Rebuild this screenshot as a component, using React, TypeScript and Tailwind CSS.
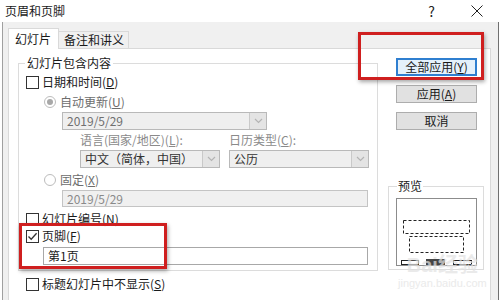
import React from 'react';

function Box({ checked = false }: { checked?: boolean }) {
  return (
    <span className="w-[13px] h-[13px] border border-[#333333] bg-white flex items-center justify-center shrink-0">
      {checked && (
        <svg width="11" height="11" viewBox="0 0 11 11">
          <path d="M1.5 5.5 L4.2 8.3 L9.6 2.2" fill="none" stroke="#333333" strokeWidth="1.3" />
        </svg>
      )}
    </span>
  );
}

function Radio({ on = false }: { on?: boolean }) {
  return (
    <span className="w-[12px] h-[12px] rounded-full border border-[#bcbcbc] bg-white flex items-center justify-center shrink-0">
      {on && <span className="w-[6px] h-[6px] rounded-full bg-[#a8a8a8]" />}
    </span>
  );
}

function Chevron() {
  return (
    <svg width="9" height="6" viewBox="0 0 9 6">
      <path d="M1 1 L4.5 4.5 L8 1" fill="none" stroke="#b4b4b4" strokeWidth="1.2" />
    </svg>
  );
}

function Select({ value, width, dark = false }: { value: string; width: string; dark?: boolean }) {
  return (
    <div className={`h-[18px] flex border border-[#b9b9b9] bg-[#efefef] ${width}`}>
      <span className={`flex-1 pl-[4px] flex items-center ${dark ? 'text-[#333333]' : 'text-[#707070]'}`}>{value}</span>
      <span className="w-[17px] border-l border-[#c9c9c9] bg-[#e4e4e4] flex items-center justify-center">
        <Chevron />
      </span>
    </div>
  );
}

function Row({ children, className = '' }: { children: React.ReactNode; className?: string }) {
  return <div className={`h-[16px] flex items-center ${className}`}>{children}</div>;
}

function Btn({ label, primary = false }: { label: React.ReactNode; primary?: boolean }) {
  return (
    <button
      className={`w-[81px] h-[18px] flex items-center justify-center text-[#1a1a1a] ${
        primary ? 'border-2 border-[#2f7fd0] bg-[#e5f1fb]' : 'border border-[#adadad] bg-[#e1e1e1]'
      }`}
    >
      {label}
    </button>
  );
}

export default function App() {
  return (
    <div className="relative w-[500px] h-[300px] overflow-hidden bg-white font-['Noto_Sans_CJK_SC','Liberation_Sans',sans-serif] text-[12px] leading-none text-[#1a1a1a]">
      {/* title bar */}
      <div className="h-[22px] flex items-center pl-[5px] pr-[17px]">
        <span className="text-[12px]">页眉和页脚</span>
        <span className="ml-auto mr-[36px] text-[14px] text-[#222222]">?</span>
        <svg width="12" height="12" viewBox="0 0 12 12">
          <path d="M0.5 0.5 L11.5 11.5 M11.5 0.5 L0.5 11.5" stroke="#222222" strokeWidth="1" />
        </svg>
      </div>

      {/* dialog body */}
      <div className="h-[278px] ml-[2px] w-[497px] border-l border-[#a0a0a0] border-r border-r-[#707070] bg-[#f0f0f0] pl-[5px] pt-[6px]">
        <div className="flex items-end h-[20px]">
          <div className="relative z-10 -mb-px w-[51px] h-[21px] border border-b-0 border-[#d9d9d9] bg-white flex items-center pl-[6px]">
            幻灯片
          </div>
          <div className="w-[70px] h-[17px] border border-l-0 border-b-0 border-[#d9d9d9] bg-[#f0f0f0] flex items-center pl-[5px]">
            备注和讲义
          </div>
        </div>

        <div className="w-[483px] h-[260px] border border-[#d9d9d9] bg-white flex pl-[9px]">
          {/* left column */}
          <div className="flex flex-col">
            <div className="relative mt-[14px] w-[360px] h-[208px] border border-[#dcdcdc] flex flex-col pl-[7px] pt-[10px]">
              <span className="absolute -top-[7px] left-[6px] bg-white px-[2px]">幻灯片包含内容</span>
              <Row className="gap-[3px]">
                <Box />
                <span>日期和时间(<u>D</u>)</span>
              </Row>
              <Row className="mt-[4px] pl-[18px] gap-[4px] text-[#6d6d6d]">
                <Radio on />
                <span>自动更新(<u>U</u>)</span>
              </Row>
              <div className="mt-[2px] ml-[36px]">
                <Select value="2019/5/29" width="w-[205px]" />
              </div>
              <div className="h-[20px] flex items-center ml-[54px] text-[#8a8a8a]">
                <span className="w-[149px]">语言(国家/地区)(<u>L</u>):</span>
                <span>日历类型(<u>C</u>):</span>
              </div>
              <div className="flex ml-[54px] gap-[9px]">
                <Select value="中文（简体，中国）" width="w-[140px]" dark />
                <Select value="公历" width="w-[140px]" dark />
              </div>
              <Row className="mt-[4px] pl-[18px] gap-[4px] text-[#6d6d6d]">
                <Radio />
                <span>固定(<u>X</u>)</span>
              </Row>
              <div className="mt-[2px] ml-[36px] w-[306px] h-[17px] border border-[#c4c4c4] bg-[#f0f0f0] flex items-center pl-[4px] text-[#8a8a8a]">
                2019/5/29
              </div>
              <Row className="mt-[4px] gap-[3px]">
                <Box />
                <span>幻灯片编号(<u>N</u>)</span>
              </Row>
              <Row className="mt-[1px] gap-[3px]">
                <Box checked />
                <span>页脚(<u>F</u>)</span>
              </Row>
              <div className="mt-[3px] ml-[17px] w-[325px] h-[18px] border border-[#a8a8a8] bg-white flex items-center pl-[4px]">
                第1页
              </div>
            </div>
            <Row className="mt-[5px] ml-[8px] gap-[3px]">
              <Box />
              <span>标题幻灯片中不显示(<u>S</u>)</span>
            </Row>
          </div>

          {/* right column */}
          <div className="ml-[10px] flex flex-col">
            <div className="ml-[8px] mt-[9px] flex flex-col gap-[9px]">
              <Btn label={<span>全部应用(<u>Y</u>)</span>} primary />
              <Btn label={<span>应用(<u>A</u>)</span>} />
              <Btn label="取消" />
            </div>
            <div className="relative mt-[56px] w-[96px] h-[84px] border border-[#dcdcdc] pl-[7px] pt-[11px]">
              <span className="absolute -top-[7px] left-[8px] bg-white px-[1px]">预览</span>
              <div className="w-[81px] h-[68px] border border-[#8c8c8c] bg-white">
                <svg width="79" height="66" viewBox="0 0 79 66">
                  <rect x="6.5" y="21.5" width="66" height="13" fill="none" stroke="#222" strokeDasharray="3 2" />
                  <rect x="12.5" y="37.5" width="54" height="16" fill="none" stroke="#222" strokeDasharray="3 2" />
                  <rect x="4.5" y="61.5" width="17" height="4" fill="none" stroke="#222" />
                  <rect x="29" y="60" width="19" height="6" fill="#444" />
                  <rect x="56.5" y="61.5" width="18" height="4" fill="none" stroke="#222" />
                </svg>
              </div>
            </div>
          </div>
        </div>
      </div>

      {/* watermark */}
      <div className="absolute left-[398px] top-[255px] flex flex-col items-center text-[#e2e2e2] opacity-70 pointer-events-none">
        <span className="text-[20px] font-bold font-['Liberation_Sans','Noto_Sans_CJK_SC',sans-serif]">Bai经验</span>
        <span className="mt-[3px] text-[11px] font-['Liberation_Sans',sans-serif]">jingyan.baidu.com</span>
      </div>

      {/* red highlight boxes */}
      <div className="absolute left-[358px] top-[32px] w-[126px] h-[48px] border-[3px] border-[#cf1f1f] shadow-[1px_2px_4px_rgba(0,0,0,0.35)]" />
      <div className="absolute left-[19px] top-[223px] w-[148px] h-[46px] border-[3px] border-[#cf1f1f] shadow-[1px_2px_4px_rgba(0,0,0,0.35)]" />
    </div>
  );
}
